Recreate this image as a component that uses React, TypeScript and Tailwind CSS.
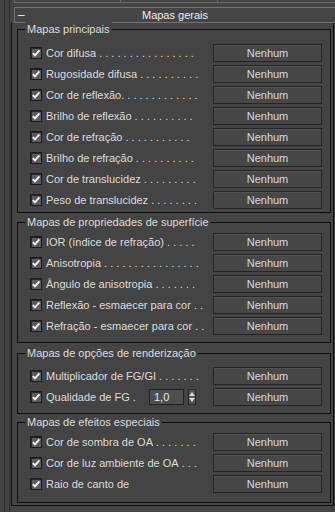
import type { ReactNode } from "react";

type Row = { label: string; dots?: number; spinner?: boolean };

type Group = {
  title: string;
  box: string;
  list: string;
  rows: Row[];
};

const groups: Group[] = [
  {
    title: "Mapas principais",
    box: "mt-[6px] pb-[3px]",
    list: "mt-[8px]",
    rows: [
      { label: "Cor difusa", dots: 16 },
      { label: "Rugosidade difusa", dots: 10 },
      { label: "Cor de reflexão.", dots: 12 },
      { label: "Brilho de reflexão", dots: 10 },
      { label: "Cor de refração", dots: 11 },
      { label: "Brilho de refração", dots: 10 },
      { label: "Cor de translucidez", dots: 9 },
      { label: "Peso de translucidez", dots: 8 },
    ],
  },
  {
    title: "Mapas de propriedades de superfície",
    box: "mt-[9px] pb-[7px]",
    list: "mt-[4px]",
    rows: [
      { label: "IOR (índice de refração)", dots: 5 },
      { label: "Anisotropia", dots: 16 },
      { label: "Ângulo de anisotropia", dots: 7 },
      { label: "Reflexão - esmaecer para cor", dots: 2 },
      { label: "Refração - esmaecer para cor", dots: 2 },
    ],
  },
  {
    title: "Mapas de opções de renderização",
    box: "mt-[10px] pb-[7px]",
    list: "mt-[7px]",
    rows: [
      { label: "Multiplicador de FG/GI", dots: 7 },
      { label: "Qualidade de FG .", spinner: true },
    ],
  },
  {
    title: "Mapas de efeitos especiais",
    box: "mt-[8px] pb-[9px]",
    list: "mt-[4px]",
    rows: [
      { label: "Cor de sombra de OA", dots: 7 },
      { label: "Cor de luz ambiente de OA", dots: 3 },
      { label: "Raio de canto de" },
    ],
  },
];

function Check() {
  return (
    <span className="flex h-[12px] w-[12px] shrink-0 items-center justify-center border border-[#1b1b1b] bg-[#5c5c5c] shadow-[inset_1px_1px_0_#2a2a2a]">
      <svg width="10" height="10" viewBox="0 0 10 10">
        <path d="M1.8 5.2 L4 7.4 L8.4 2.4" fill="none" stroke="#f2f2f2" strokeWidth="1.9" />
      </svg>
    </span>
  );
}

function Spinner() {
  return (
    <div className="flex items-center">
      <div className="flex h-[16px] w-[35px] items-center border border-[#232323] bg-[#4f4f4f] pl-[4px] text-[#e4e4e4]">
        1,0
      </div>
      <div className="ml-[4px] flex h-[16px] w-[8px] flex-col items-center justify-between border border-[#2a2a2a] bg-[#555] py-[2px]">
        <svg width="6" height="4" viewBox="0 0 6 4">
          <path d="M0 4 L3 0 L6 4 Z" fill="#dcdcdc" />
        </svg>
        <svg width="6" height="4" viewBox="0 0 6 4">
          <path d="M0 0 L3 4 L6 0 Z" fill="#dcdcdc" />
        </svg>
      </div>
    </div>
  );
}

function MapRow({ row }: { row: Row }) {
  const dots = row.dots ? Array(row.dots).fill(".").join(" ") : "";
  let label: ReactNode = (
    <div className="ml-[4px] flex min-w-0 flex-1 items-center whitespace-nowrap pr-[6px]">
      <span className="shrink-0">{row.label}</span>
      {dots && <span className="ml-[3px]">{dots}</span>}
    </div>
  );
  if (row.spinner) {
    label = (
      <div className="ml-[4px] flex min-w-0 flex-1 items-center whitespace-nowrap">
        <span className="w-[103px] shrink-0">{row.label}</span>
        <Spinner />
      </div>
    );
  }
  return (
    <div className="flex h-[18px] items-center">
      <div className="ml-[12px]">
        <Check />
      </div>
      {label}
      <button className="h-[18px] w-[109px] shrink-0 border border-[#262626] bg-[#474747] text-[#d4dae0] shadow-[inset_0_1px_0_#525252]">
        Nenhum
      </button>
    </div>
  );
}

function GroupBox({ group }: { group: Group }) {
  return (
    <div className={`border border-[#0e0e0e] pr-[8px] ${group.box}`}>
      <div className="-mt-[8px] ml-[7px] h-[14px] w-fit bg-[#444444] px-[2px] leading-[14px] text-[#dcdcdc]">
        {group.title}
      </div>
      <div className={`flex flex-col gap-[3px] ${group.list}`}>
        {group.rows.map((r) => (
          <MapRow key={r.label} row={r} />
        ))}
      </div>
    </div>
  );
}

export default function App() {
  return (
    <div
      className="flex h-[512px] w-[335px] overflow-hidden bg-[#444444] text-[11px] text-[#dcdcdc]"
      style={{ fontFamily: '"Liberation Sans", Arial, sans-serif' }}
    >
      <div className="flex w-[11px] shrink-0 pl-[4px]">
        <div className="w-[1px] bg-[#2c2c2c]" />
        <div className="w-[4px]" />
        <div className="w-[1px] bg-[#2c2c2c]" />
      </div>
      <div className="flex w-[324px] shrink-0 flex-col">
        <div className="ml-[3px] flex h-[3px] border-b border-l border-[#6c6c6c]">
          <div className="w-[105px]" />
          <div className="w-[1px] bg-[#6c6c6c]" />
          <div className="w-[96px]" />
          <div className="w-[1px] bg-[#6c6c6c]" />
        </div>
        <div className="ml-[3px] mt-[4px] flex h-[16px] w-[324px] items-center border border-[#727272] bg-[#454545] text-[#ececec]">
          <span className="w-[14px] pl-[3px] text-[12px] leading-none">–</span>
          <span className="flex-1 pr-[16px] text-center">Mapas gerais</span>
        </div>
        <div className="flex w-[323px] flex-col border-x border-b border-[#0e0e0e] pb-[2px] pl-[5px] pr-[2px]">
          {groups.map((g) => (
            <GroupBox key={g.title} group={g} />
          ))}
        </div>
      </div>
    </div>
  );
}
